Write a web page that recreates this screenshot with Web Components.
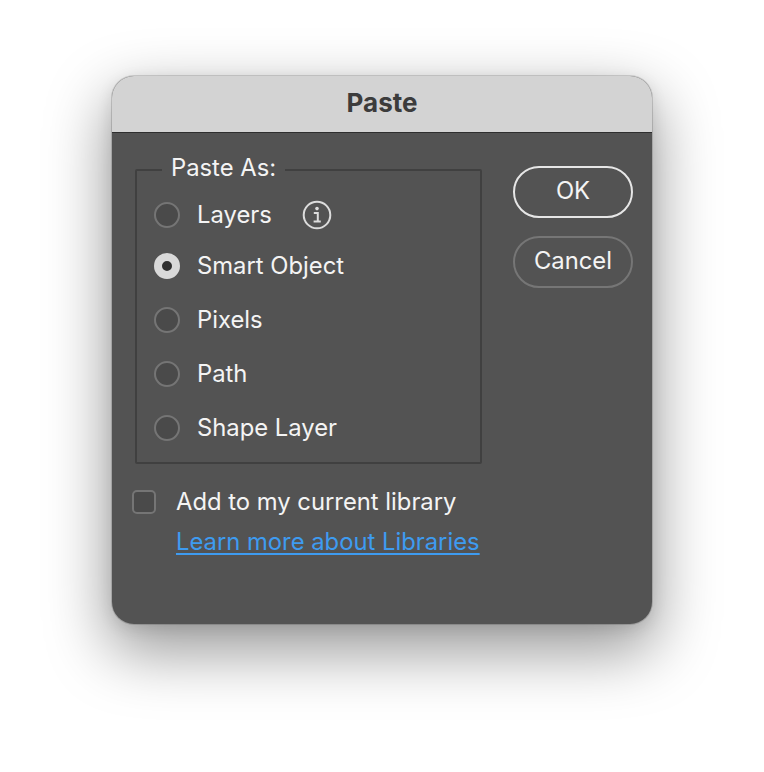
<!DOCTYPE html>
<html>
<head>
<meta charset="utf-8">
<style>
  html, body { margin: 0; height: 100%; background: #fff; }
  body { font-family: Inter, "Liberation Sans", sans-serif; }
</style>
</head>
<body>
<paste-dialog heading="Paste">
  <option-group legend="Paste As:">
    <radio-option label="Layers" info></radio-option>
    <radio-option label="Smart Object" checked></radio-option>
    <radio-option label="Pixels"></radio-option>
    <radio-option label="Path"></radio-option>
    <radio-option label="Shape Layer"></radio-option>
  </option-group>
  <library-option slot="footer"></library-option>
  <push-button slot="actions" primary>OK</push-button>
  <push-button slot="actions">Cancel</push-button>
</paste-dialog>
<script>
class PasteDialog extends HTMLElement {
    constructor() {
        super();
        this.attachShadow({ mode: 'open' });
    }

    connectedCallback() {
        this.shadowRoot.innerHTML = `
            <style>
                :host {
                    display: block;
                    box-sizing: border-box;
                    width: 764px;
                    height: 772px;
                    padding: 76px 112px 0;
                }
                .window {
                    box-sizing: border-box;
                    width: 540px;
                    height: 548px;
                    border-radius: 22px;
                    background: #535353;
                    box-shadow: 0 0 0 1px rgba(0,0,0,.14), 0 24px 62px 4px rgba(0,0,0,.4), 0 4px 16px rgba(0,0,0,.1);
                    overflow: hidden;
                }
                header {
                    box-sizing: border-box;
                    height: 57px;
                    background: #d3d3d3;
                    border-bottom: 1px solid #2e2e2e;
                    color: #3c3c3c;
                    font-size: 26px;
                    font-weight: 700;
                    line-height: 54px;
                    text-align: center;
                }
                .content {
                    display: grid;
                    grid-template-columns: 347px 120px;
                    column-gap: 31px;
                    padding: 20px 0 0 23px;
                }
                .main { display: flex; flex-direction: column; }
                .actions {
                    display: flex;
                    flex-direction: column;
                    gap: 18px;
                    padding-top: 13px;
                }
            </style>
            <div class="window">
                <header>${this.getAttribute('heading')}</header>
                <div class="content">
                    <div class="main">
                        <slot></slot>
                        <slot name="footer"></slot>
                    </div>
                    <div class="actions"><slot name="actions"></slot></div>
                </div>
            </div>
        `;
    }
}

class OptionGroup extends HTMLElement {
    constructor() {
        super();
        this.attachShadow({ mode: 'open' });
    }

    connectedCallback() {
        this.shadowRoot.innerHTML = `
            <style>
                :host { display: block; }
                fieldset {
                    box-sizing: border-box;
                    height: 311px;
                    margin: 0;
                    padding: 5px 0 0 17px;
                    border: 2px solid #404040;
                    border-radius: 2px;
                }
                legend {
                    margin-left: 8px;
                    padding: 0 9px 4px;
                    color: #f4f4f4;
                    font-size: 23.8px;
                    line-height: 29px;
                }
            </style>
            <fieldset>
                <legend>${this.getAttribute('legend')}</legend>
                <slot></slot>
            </fieldset>
        `;
    }
}

class RadioOption extends HTMLElement {
    constructor() {
        super();
        this.attachShadow({ mode: 'open' });
    }

    connectedCallback() {
        const info = this.hasAttribute('info');
        this.shadowRoot.innerHTML = `
            <style>
                :host {
                    display: flex;
                    align-items: center;
                    height: 54px;
                    color: #f4f4f4;
                    font-size: 23.8px;
                }
                :host([info]) { height: 48px; }
                .dot {
                    box-sizing: border-box;
                    flex: none;
                    width: 26px;
                    height: 26px;
                    margin-right: 17px;
                    border: 2px solid #757575;
                    border-radius: 50%;
                    background: #4a4a4a;
                }
                :host([checked]) .dot {
                    border: 8px solid #d9d9d9;
                    background: #2f2f2f;
                }
                .label { padding-bottom: 2px; }
                svg { margin-left: 30px; }
            </style>
            <span class="dot"></span>
            <span class="label">${this.getAttribute('label')}</span>
            ${info ? `<svg width="30" height="30" viewBox="0 0 30 30" fill="none">
                <circle cx="15" cy="15" r="13.3" stroke="#dcdcdc" stroke-width="2"/>
                <circle cx="15" cy="8.6" r="1.8" fill="#dcdcdc"/>
                <path d="M11.8 13h4v8.4M11.6 21.6h7.2" stroke="#dcdcdc" stroke-width="2"/>
            </svg>` : ''}
        `;
    }
}

class LibraryOption extends HTMLElement {
    constructor() {
        super();
        this.attachShadow({ mode: 'open' });
    }

    connectedCallback() {
        this.shadowRoot.innerHTML = `
            <style>
                :host {
                    display: grid;
                    grid-template-columns: 24px auto;
                    column-gap: 20px;
                    row-gap: 11px;
                    margin: 23px 0 0 -3px;
                    color: #f4f4f4;
                    font-size: 23.8px;
                    line-height: 29px;
                    white-space: nowrap;
                }
                .box {
                    box-sizing: border-box;
                    width: 24px;
                    height: 24px;
                    margin-top: 3px;
                    border: 2px solid #757575;
                    border-radius: 5px;
                    background: #4a4a4a;
                }
                a {
                    grid-column: 2;
                    color: #3e9bf0;
                    text-decoration: underline;
                    text-underline-offset: 3px;
                    text-decoration-thickness: 2px;
                }
            </style>
            <span class="box"></span>
            <span>Add to my current library</span>
            <a href="#">Learn more about Libraries</a>
        `;
    }
}

class PushButton extends HTMLElement {
    constructor() {
        super();
        this.attachShadow({ mode: 'open' });
    }

    connectedCallback() {
        this.shadowRoot.innerHTML = `
            <style>
                :host {
                    display: flex;
                    box-sizing: border-box;
                    height: 52px;
                    align-items: center;
                    justify-content: center;
                    padding-bottom: 3px;
                    border: 2px solid #767676;
                    border-radius: 26px;
                    color: #f4f4f4;
                    font-size: 23.8px;
                }
                :host([primary]) { border-color: #e6e6e6; }
            </style>
            <slot></slot>
        `;
    }
}

customElements.define('paste-dialog', PasteDialog);
customElements.define('option-group', OptionGroup);
customElements.define('radio-option', RadioOption);
customElements.define('library-option', LibraryOption);
customElements.define('push-button', PushButton);
</script>
</body>
</html>
